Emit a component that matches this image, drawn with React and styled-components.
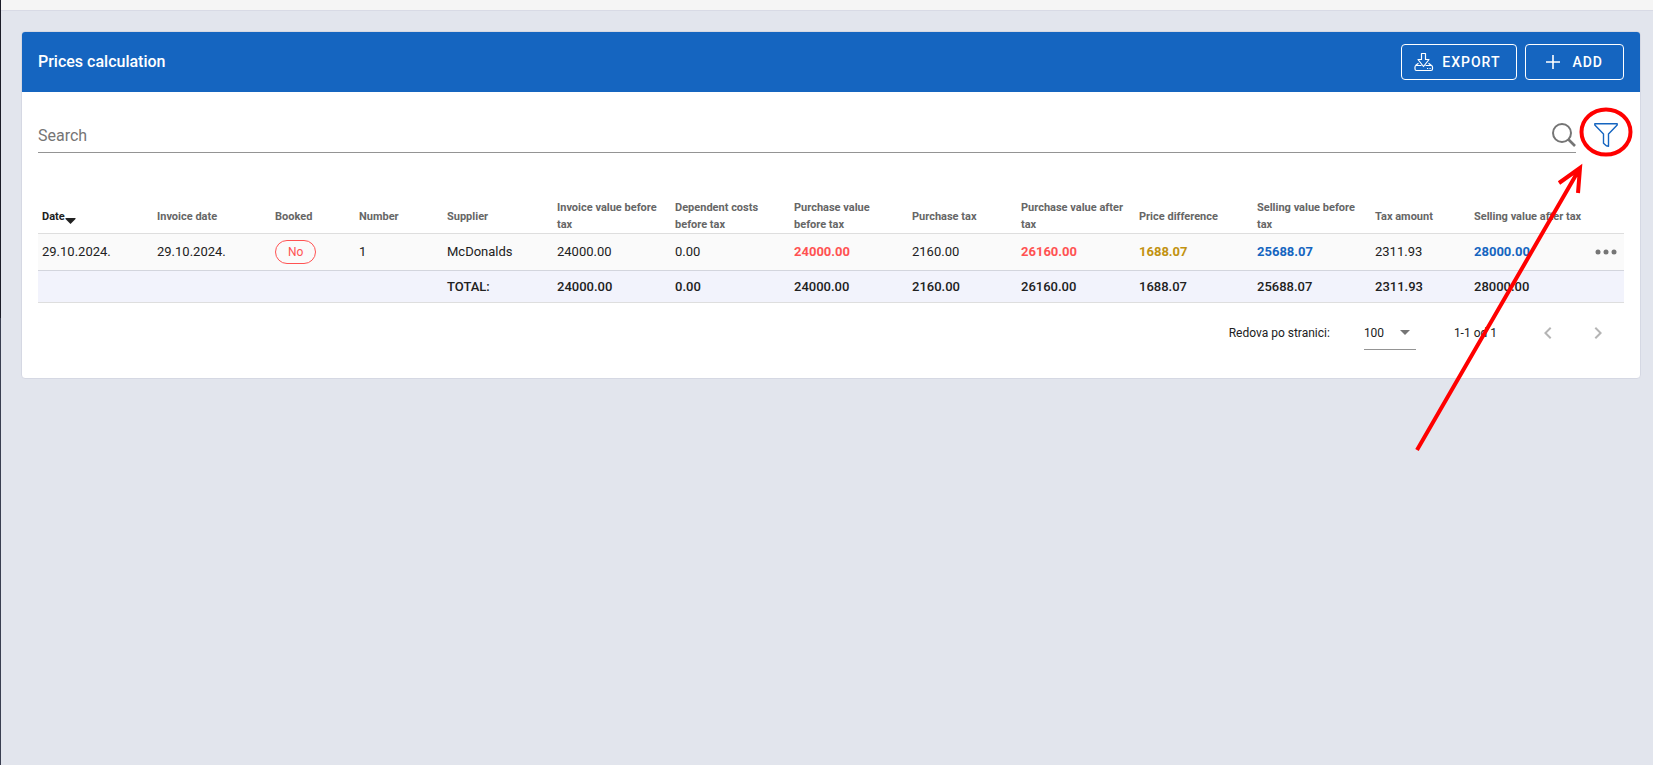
// Libs
import React from 'react';
import styled, { createGlobalStyle, css } from 'styled-components';

const GlobalStyle = createGlobalStyle`
	* {
		box-sizing: border-box;
	}
	body {
		margin: 0;
		background: #e2e5ed;
		color: #212121;
		font-family: Roboto, "Liberation Sans", sans-serif;
	}
	button, input, select {
		font-family: inherit;
	}
`;

const Page = styled.div`
	position: relative;
	display: flex;
	min-height: 100vh;
`;

const SidebarEdge = styled.aside`
	display: flex;
	flex-direction: column;
	width: 1px;
	background: #3a3f51;
`;

const SidebarTop = styled.div`
	height: 318px;
	background: #1b1c28;
`;

const Content = styled.div`
	flex: 1;
	min-width: 0;
`;

const TopBar = styled.header`
	height: 11px;
	background: #f5f5f5;
	border-bottom: 1px solid #d8dae5;
`;

const Main = styled.main`
	padding: 20px 12px 20px 20px;
`;

const Card = styled.section`
	overflow: hidden;
	background: #fff;
	border: 1px solid #d5d8e3;
	border-radius: 4px;
`;

const CardHeader = styled.div`
	display: flex;
	align-items: center;
	justify-content: space-between;
	height: 60px;
	padding: 0 16px;
	background: #1565c0;
	color: #fff;
`;

const Title = styled.h1`
	margin: 0;
	font-size: 16px;
	font-weight: 500;
	line-height: 24px;
`;

const Actions = styled.div`
	display: flex;
	gap: 8px;
`;

const ActionButton = styled.button`
	display: flex;
	align-items: center;
	justify-content: center;
	gap: ${(props) => (props.$wide ? '12px' : '8px')};
	height: 36px;
	padding: ${(props) => (props.$wide ? '0 20px' : '0 16px 0 12px')};
	border: 1px solid #fff;
	border-radius: 4px;
	background: transparent;
	color: #fff;
	font-size: 14px;
	font-weight: 500;
	letter-spacing: 1px;
	text-transform: uppercase;
	cursor: pointer;
`;

const CardBody = styled.div`
	padding: 24px 16px 20px;
`;

const SearchRow = styled.div`
	display: flex;
	align-items: center;
	gap: 18px;
	padding-right: 6px;
`;

const SearchField = styled.label`
	display: flex;
	flex: 1;
	align-items: center;
	height: 37px;
	padding-top: 2px;
	border-bottom: 1px solid #949494;
	color: #757575;
`;

const SearchInput = styled.input`
	flex: 1;
	height: 32px;
	padding: 0;
	border: 0;
	outline: 0;
	background: transparent;
	color: #212121;
	font-size: 16px;
	&::placeholder {
		color: #757575;
		opacity: 1;
	}
`;

const IconButton = styled.button`
	display: flex;
	align-items: center;
	justify-content: center;
	padding: 0;
	border: 0;
	background: transparent;
	color: ${(props) => props.$color || '#757575'};
	cursor: pointer;
	&:disabled {
		color: #b5b5b5;
		cursor: default;
	}
`;

const Table = styled.table`
	width: 100%;
	margin-top: 46px;
	table-layout: fixed;
	border-collapse: separate;
	border-spacing: 0;
`;

const Col = styled.col`
	width: ${(props) => props.$width}px;
`;

const HeadCell = styled.th`
	height: 35px;
	padding: 0 4px;
	border-bottom: 1px solid #dedede;
	color: ${(props) => (props.$sorted ? '#212121' : '#666')};
	font-size: 11px;
	font-weight: 700;
	line-height: 17px;
	text-align: left;
	vertical-align: middle;
`;

const SortIcon = styled.svg`
	vertical-align: -4px;
`;

const tones = {
	red: '#ff5252',
	gold: '#c29210',
	blue: '#1565c0',
};

const Cell = styled.td`
	height: 37px;
	padding: 0 4px 1px;
	border-bottom: 1px solid #d3d5dd;
	background: #fafafa;
	font-size: 13px;
	white-space: nowrap;
	${(props) => props.$tone && css`
		color: ${tones[props.$tone]};
		font-weight: 700;
	`}
`;

const TotalCell = styled(Cell)`
	height: 32px;
	padding-bottom: 0;
	border-bottom-color: #dedede;
	background: #f2f3fc;
	font-weight: 500;
`;

const Chip = styled.span`
	display: inline-block;
	padding: 0 12px;
	border: 1px solid #ff5252;
	border-radius: 12px;
	color: #ff5252;
	font-size: 12px;
	line-height: 22px;
	vertical-align: middle;
`;

const Pagination = styled.nav`
	display: flex;
	align-items: center;
	justify-content: flex-end;
	height: 50px;
	margin-top: 5px;
	padding-right: 14px;
	font-size: 12px;
`;

const PageSize = styled.label`
	display: flex;
	align-items: center;
	gap: 34px;
`;

const SelectBox = styled.span`
	display: flex;
	align-items: center;
	height: 33px;
	border-bottom: 1px solid #949494;
`;

const Select = styled.select`
	width: 36px;
	padding: 0;
	border: 0;
	outline: 0;
	appearance: none;
	background: transparent;
	color: #212121;
	font-size: 12px;
`;

const SelectArrow = styled.svg`
	margin-right: 6px;
`;

const Range = styled.span`
	margin: 0 39px 0 38px;
`;

const Pager = styled.div`
	display: flex;
	gap: 26px;
`;

const Annotation = styled.svg`
	position: absolute;
	top: 101px;
	right: 14px;
	pointer-events: none;
`;

const ExportIcon = () => (
	<svg width="20" height="20" viewBox="0 0 20 20" fill="none" stroke="currentColor" strokeWidth="1.2" strokeLinejoin="round">
		<path d="M7.500 1.500h4v6h3.500L9.500 14.500 4 7.500h3.500z" />
		<path d="M4.500 11.200L1.500 13.500M14.500 11.200l3 2.300M7.500 13.500h-5q-1.500 0-1.500 1.500v2q0 1.500 1.500 1.500h14.500q1.500 0 1.500-1.500v-2q0-1.500-1.500-1.500h-5.500" />
		<path d="M13 16.500h1.200M15.500 16.500h1.200" />
	</svg>
);

const PlusIcon = () => (
	<svg width="14" height="14" viewBox="0 0 14 14" fill="none" stroke="currentColor" strokeWidth="1.6">
		<path d="M7 0v14M0 7h14" />
	</svg>
);

const SearchIcon = () => (
	<svg width="24" height="24" viewBox="0 0 24 24" fill="none" stroke="currentColor" strokeWidth="2">
		<circle cx="10" cy="10" r="9" />
		<path d="M16 16l7 7" strokeWidth="2.6" />
	</svg>
);

const FilterIcon = () => (
	<svg width="24" height="24" viewBox="0 0 24 24" fill="none" stroke="currentColor" strokeWidth="1.4" strokeLinejoin="round">
		<path d="M.8 .8h22.400v1.200L14.500 11v12.200l-2.200-.4-2.800-2.600V11L.8 2z" />
	</svg>
);

const DotsIcon = () => (
	<svg width="22" height="6" viewBox="0 0 22 6" fill="currentColor">
		<circle cx="3" cy="3" r="2.500" />
		<circle cx="11" cy="3" r="2.500" />
		<circle cx="19" cy="3" r="2.500" />
	</svg>
);

const Chevron = ({ d }) => (
	<svg width="24" height="24" viewBox="0 0 24 24" fill="currentColor">
		<path d={d} />
	</svg>
);

const columns = [
	{ label: 'Date', width: 115, value: '29.10.2024.', sorted: true },
	{ label: 'Invoice date', width: 118, value: '29.10.2024.' },
	{ label: 'Booked', width: 84, value: 'No', chip: true },
	{ label: 'Number', width: 88, value: '1' },
	{ label: 'Supplier', width: 110, value: 'McDonalds', total: 'TOTAL:' },
	{ label: 'Invoice value before tax', width: 118, value: '24000.00', total: '24000.00' },
	{ label: 'Dependent costs before tax', width: 119, value: '0.00', total: '0.00' },
	{ label: 'Purchase value before tax', width: 118, value: '24000.00', total: '24000.00', tone: 'red' },
	{ label: 'Purchase tax', width: 109, value: '2160.00', total: '2160.00' },
	{ label: 'Purchase value after tax', width: 118, value: '26160.00', total: '26160.00', tone: 'red' },
	{ label: 'Price difference', width: 118, value: '1688.07', total: '1688.07', tone: 'gold' },
	{ label: 'Selling value before tax', width: 118, value: '25688.07', total: '25688.07', tone: 'blue' },
	{ label: 'Tax amount', width: 99, value: '2311.93', total: '2311.93' },
	{ label: 'Selling value after tax', width: 121, value: '28000.00', total: '28000.00', tone: 'blue' },
];

const PricesTable = () => (
	<Table>
		<colgroup>
			{columns.map((col) => <Col key={col.label} $width={col.width} />)}
			<Col $width={33} />
		</colgroup>
		<thead>
			<tr>
				{columns.map((col) => (
					<HeadCell key={col.label} scope="col" $sorted={col.sorted}>
						{col.label}
						{col.sorted && (
							<SortIcon width="11" height="6" viewBox="0 0 11 6" fill="currentColor">
								<path d="M.5 0h10v1l-5 5-5-5z" />
							</SortIcon>
						)}
					</HeadCell>
				))}
				<HeadCell as="td" />
			</tr>
		</thead>
		<tbody>
			<tr>
				{columns.map((col) => (
					<Cell key={col.label} $tone={col.tone}>
						{col.chip ? <Chip>{col.value}</Chip> : col.value}
					</Cell>
				))}
				<Cell>
					<IconButton type="button" aria-label="Row actions"><DotsIcon /></IconButton>
				</Cell>
			</tr>
		</tbody>
		<tfoot>
			<tr>
				{columns.map((col) => <TotalCell key={col.label}>{col.total}</TotalCell>)}
				<TotalCell />
			</tr>
		</tfoot>
	</Table>
);

const App = () => (
	<Page>
		<GlobalStyle />
		<SidebarEdge>
			<SidebarTop />
		</SidebarEdge>
		<Content>
			<TopBar />
			<Main>
				<Card>
					<CardHeader>
						<Title>Prices calculation</Title>
						<Actions>
							<ActionButton type="button"><ExportIcon />Export</ActionButton>
							<ActionButton type="button" $wide><PlusIcon />Add</ActionButton>
						</Actions>
					</CardHeader>
					<CardBody>
						<SearchRow>
							<SearchField>
								<SearchInput type="text" placeholder="Search" aria-label="Search" />
								<SearchIcon />
							</SearchField>
							<IconButton type="button" aria-label="Filter" $color="#1565c0"><FilterIcon /></IconButton>
						</SearchRow>
						<PricesTable />
						<Pagination aria-label="Pagination">
							<PageSize>
								Redova po stranici:
								<SelectBox>
									<Select defaultValue="100">
										<option value="100">100</option>
									</Select>
									<SelectArrow width="10" height="5" viewBox="0 0 10 5" fill="#757575">
										<path d="M0 0h10L5 5z" />
									</SelectArrow>
								</SelectBox>
							</PageSize>
							<Range>1-1 od 1</Range>
							<Pager>
								<IconButton type="button" aria-label="Previous page" disabled>
									<Chevron d="M15.410 16.580L10.830 12l4.580-4.590L14 6l-6 6 6 6z" />
								</IconButton>
								<IconButton type="button" aria-label="Next page" disabled>
									<Chevron d="M8.590 16.580L13.170 12 8.590 7.410 10 6l6 6-6 6z" />
								</IconButton>
							</Pager>
						</Pagination>
					</CardBody>
				</Card>
			</Main>
		</Content>
		<Annotation width="240" height="360" viewBox="0 0 240 360" fill="none" stroke="#f00" strokeWidth="4">
			<ellipse cx="207" cy="31" rx="24.500" ry="22.500" />
			<path d="M18 349L181 67M160 82L181 67l-2 25" />
		</Annotation>
	</Page>
);

export default App;
